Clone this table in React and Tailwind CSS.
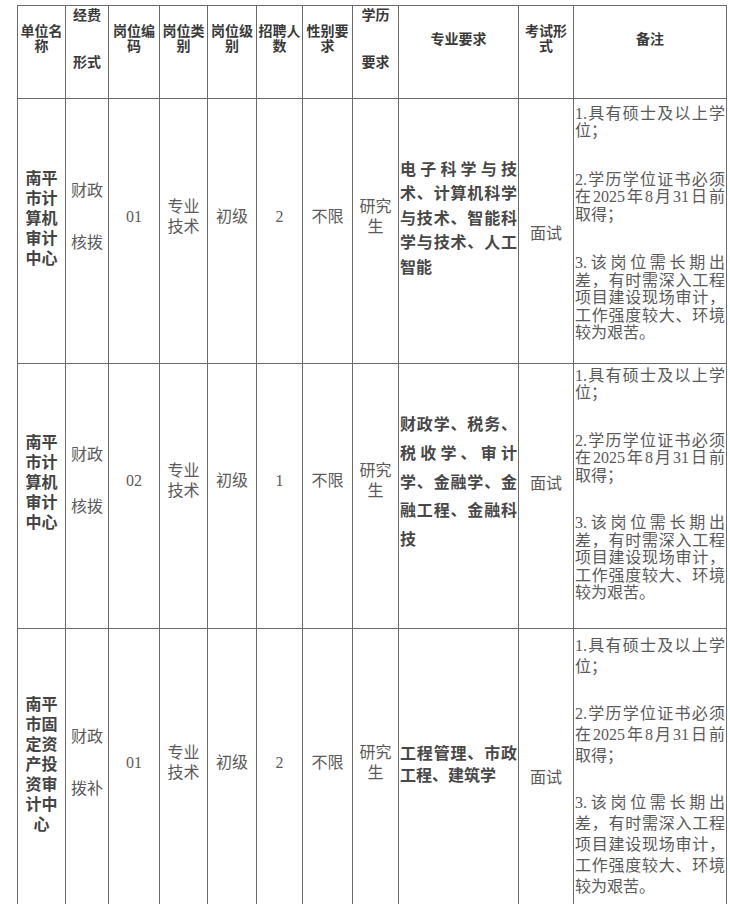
const headFont = "font-['Noto_Sans_CJK_SC',sans-serif]";
const bodyFont = "font-['Liberation_Serif','Noto_Sans_CJK_SC',serif]";

const notes = [
  "1.具有硕士及以上学位；",
  "2.学历学位证书必须在2025年8月31日前取得；",
  "3.该岗位需长期出差，有时需深入工程项目建设现场审计，工作强度较大、环境较为艰苦。",
];

const rows = [
  {
    unit: "南平市计算机审计中心",
    fund: ["财政", "核拨"],
    code: "01",
    count: "2",
    major: "电子科学与技术、计算机科学与技术、智能科学与技术、人工智能",
    h: "h-[265px]",
    pb: "pb-[28px]",
    notePb: "pb-[16px]",
    examPad: "pt-[5px]",
    majorLh: "leading-[24.5px]",
    noteLh: "leading-[17.5px]",
    noteGap: "mt-[31px]",
  },
  {
    unit: "南平市计算机审计中心",
    fund: ["财政", "核拨"],
    code: "02",
    count: "1",
    major: "财政学、税务、税收学、审计学、金融学、金融工程、金融科技",
    h: "h-[265px]",
    pb: "pb-[30px]",
    notePb: "pb-[24px]",
    examPad: "pb-[24px]",
    majorLh: "leading-[28.7px]",
    noteLh: "leading-[17.5px]",
    noteGap: "mt-[30px]",
  },
  {
    unit: "南平市固定资产投资审计中心",
    fund: ["财政", "拨补"],
    code: "01",
    count: "2",
    major: "工程管理、市政工程、建筑学",
    h: "h-[298px]",
    pb: "pb-[30px]",
    notePb: "pb-[24px]",
    examPad: "pb-0",
    majorLh: "leading-[22px]",
    noteLh: "leading-[21px]",
    noteGap: "mt-[26px]",
  },
];

const widths = [48, 43, 51, 48, 49, 46, 50, 46, 120, 55, 153];

const Th = ({ children }) => (
  <th className="border border-[#6b6b6b] p-0 pb-[28px] align-middle text-center text-[14px] leading-[15px] font-bold text-[#3a3a3a]">
    {children}
  </th>
);

export default function App() {
  return (
    <div className="min-h-screen bg-white pl-[17px] pt-[5px]">
      <table className={`table-fixed border-collapse w-[710px] ${headFont}`}>
        <colgroup>
          {widths.map((w, i) => (
            <col key={i} style={{ width: w }} />
          ))}
        </colgroup>
        <thead>
          <tr className="h-[93px]">
            <Th>单位名称</Th>
            <Th>
              <div>经费</div>
              <div className="h-[32px]"></div>
              <div>形式</div>
            </Th>
            <Th>岗位编码</Th>
            <Th>岗位类别</Th>
            <Th>岗位级别</Th>
            <Th>招聘人数</Th>
            <Th>性别要求</Th>
            <Th>
              <div>学历</div>
              <div className="h-[32px]"></div>
              <div>要求</div>
            </Th>
            <Th>专业要求</Th>
            <Th>考试形式</Th>
            <Th>备注</Th>
          </tr>
        </thead>
        <tbody className="text-[#5a5a5a]">
          {rows.map((r, i) => {
            const cell = "border border-[#6b6b6b] p-0 align-middle text-center";
            const td = `${cell} ${r.pb}`;
            return (
              <tr key={i} className={r.h}>
                <td className={`${td} px-[7px] text-[16px] leading-[20px] font-bold text-[#444]`}>
                  {r.unit}
                </td>
                <td className={`${td} ${bodyFont} text-[16px] leading-[20px]`}>
                  <div>{r.fund[0]}</div>
                  <div className="h-[32px]"></div>
                  <div>{r.fund[1]}</div>
                </td>
                <td className={`${td} ${bodyFont} text-[16px]`}>{r.code}</td>
                <td className={`${td} ${bodyFont} px-[7px] text-[16px] leading-[20px]`}>
                  专业技术
                </td>
                <td className={`${td} ${bodyFont} text-[16px]`}>初级</td>
                <td className={`${td} ${bodyFont} text-[16px]`}>{r.count}</td>
                <td className={`${td} ${bodyFont} text-[16px]`}>不限</td>
                <td className={`${td} ${bodyFont} px-[3px] text-[16px] leading-[20px]`}>
                  研究生
                </td>
                <td
                  className={`${td} px-[1px] text-justify text-[16px] font-bold text-[#484848] ${r.majorLh}`}
                >
                  {r.major}
                </td>
                <td className={`${cell} ${bodyFont} text-[16px] ${r.examPad}`}>面试</td>
                <td
                  className={`${cell} ${r.notePb} ${bodyFont} px-[1px] text-[16px] text-[#5a5a5a] ${r.noteLh}`}
                >
                  {notes.map((n, k) => (
                    <p key={k} className={`text-justify ${k > 0 ? r.noteGap : ""}`}>
                      {n}
                    </p>
                  ))}
                </td>
              </tr>
            );
          })}
        </tbody>
      </table>
    </div>
  );
}
